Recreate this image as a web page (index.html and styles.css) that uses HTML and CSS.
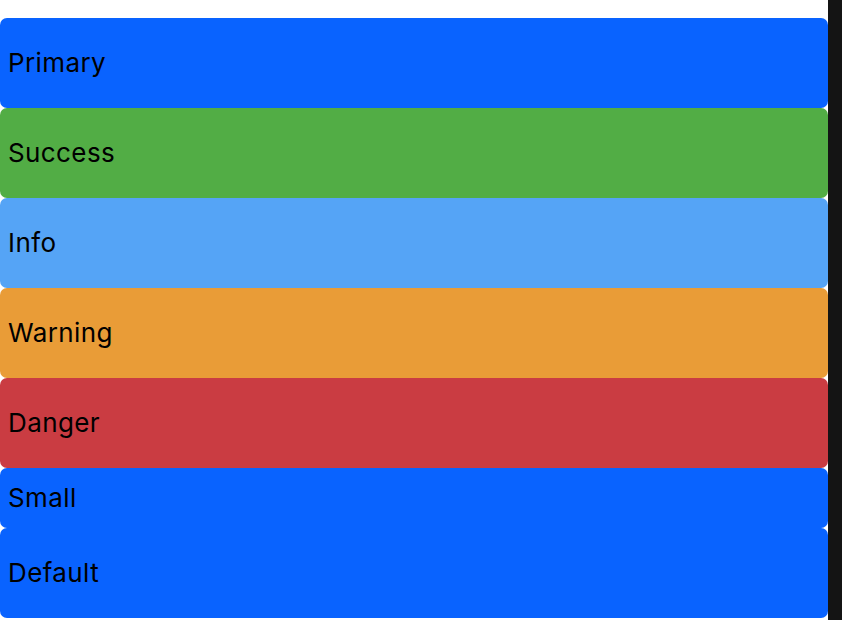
FILE: index.html
```html
<!DOCTYPE html>
<html>
<head>
<meta charset="utf-8">
<link rel="stylesheet" href="styles.css">
</head>
<body>
<div class="page">
  <main class="list">
    <button class="btn primary">Primary</button>
    <button class="btn success">Success</button>
    <button class="btn info">Info</button>
    <button class="btn warning">Warning</button>
    <button class="btn danger">Danger</button>
    <button class="btn primary small">Small</button>
    <button class="btn primary">Default</button>
  </main>
  <div class="strip"></div>
</div>
</body>
</html>
```

FILE: styles.css
```css
html, body {
  margin: 0;
  padding: 0;
  height: 100%;
  overflow: hidden;
  background: #ffffff;
}
.page {
  display: flex;
  height: 620px;
}
.list {
  flex: 1;
  display: flex;
  flex-direction: column;
  padding-top: 18px;
}
.strip {
  width: 14px;
  background: #141414;
}
.btn {
  display: flex;
  align-items: center;
  height: 90px;
  flex: none;
  border: none;
  border-radius: 7px;
  padding: 0 8px 2px;
  margin: 0;
  font-family: Inter, "Noto Sans", sans-serif;
  font-size: 26px;
  letter-spacing: 0.4px;
  color: #000000;
  text-align: left;
}
.btn.small {
  height: 60px;
}
.primary { background: #0963ff; }
.success { background: #52ad45; }
.info { background: #55a4f6; }
.warning { background: #e99c37; }
.danger { background: #ca3c42; }
```
